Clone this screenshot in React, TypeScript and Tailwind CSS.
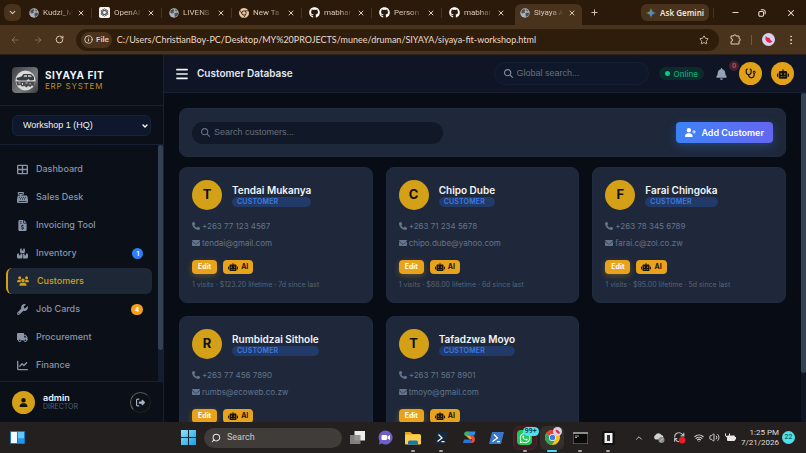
import type { ReactNode } from "react";
import {
  FaBars,
  FaBell,
  FaBoxesStacked,
  FaCashRegister,
  FaChartLine,
  FaChrome,
  FaEnvelope,
  FaFileInvoiceDollar,
  FaGithub,
  FaMagnifyingGlass,
  FaPhone,
  FaRightFromBracket,
  FaRobot,
  FaStethoscope,
  FaTableCellsLarge,
  FaTruck,
  FaUser,
  FaUserPlus,
  FaUsers,
  FaWhatsapp,
  FaWrench,
} from "react-icons/fa6";
import {
  ArrowLeft,
  ArrowRight,
  ChevronDown,
  ChevronUp,
  EllipsisVertical,
  Info,
  Minus,
  Plus,
  RotateCw,
  Search,
  Star,
  Volume2,
  Wifi,
  X,
} from "lucide-react";

type Favicon = "globe" | "openai" | "chrome" | "github";

const tabs: { id: number; title: string; icon: Favicon; active?: boolean }[] = [
  { id: 1, title: "Kudzi_M", icon: "globe" },
  { id: 2, title: "OpenAI", icon: "openai" },
  { id: 3, title: "LIVENS", icon: "globe" },
  { id: 4, title: "New Ta", icon: "chrome" },
  { id: 5, title: "mabhar", icon: "github" },
  { id: 6, title: "Person", icon: "github" },
  { id: 7, title: "mabhar", icon: "github" },
  { id: 8, title: "Siyaya A", icon: "globe", active: true },
];

const navItems = [
  { label: "Dashboard", icon: FaTableCellsLarge },
  { label: "Sales Desk", icon: FaCashRegister },
  { label: "Invoicing Tool", icon: FaFileInvoiceDollar },
  { label: "Inventory", icon: FaBoxesStacked, count: 1, countClass: "bg-blue-500" },
  { label: "Customers", icon: FaUsers, active: true },
  { label: "Job Cards", icon: FaWrench, count: 4, countClass: "bg-[#f59e1b]" },
  { label: "Procurement", icon: FaTruck },
  { label: "Finance", icon: FaChartLine },
];

type Customer = { name: string; phone: string; email: string; stats?: string };

const customers: Customer[] = [
  { name: "Tendai Mukanya", phone: "+263 77 123 4567", email: "tendai@gmail.com", stats: "1 visits · $123.20 lifetime · 7d since last" },
  { name: "Chipo Dube", phone: "+263 71 234 5678", email: "chipo.dube@yahoo.com", stats: "1 visits · $88.00 lifetime · 6d since last" },
  { name: "Farai Chingoka", phone: "+263 78 345 6789", email: "farai.c@zol.co.zw", stats: "1 visits · $95.00 lifetime · 5d since last" },
  { name: "Rumbidzai Sithole", phone: "+263 77 456 7890", email: "rumbs@ecoweb.co.zw" },
  { name: "Tafadzwa Moyo", phone: "+263 71 567 8901", email: "tmoyo@gmail.com" },
];

function TabIcon({ kind }: { kind: Favicon }) {
  if (kind === "github") return <FaGithub className="size-[11px] shrink-0 text-white" />;
  if (kind === "chrome") return <FaChrome className="size-[10px] shrink-0 text-[#e9c7a8]" />;
  if (kind === "openai") {
    return (
      <svg viewBox="0 0 20 20" className="size-[11px] shrink-0">
        <rect width="20" height="20" rx="3" fill="#f4f4f4" />
        <g fill="none" stroke="#444" strokeWidth="1.3">
          <ellipse cx="10" cy="10" rx="3.4" ry="6.8" />
          <ellipse cx="10" cy="10" rx="3.4" ry="6.8" transform="rotate(60 10 10)" />
          <ellipse cx="10" cy="10" rx="3.4" ry="6.8" transform="rotate(120 10 10)" />
        </g>
      </svg>
    );
  }
  return (
    <svg viewBox="0 0 20 20" className="size-[10px] shrink-0">
      <circle cx="10" cy="10" r="9.5" fill="#aeb4b9" />
      <path d="M3 5l5-3 3 2-2 3 1 2-4 2-3-1zM11 10l5-1 3 2-3 5-4 2-1-4z" fill="#4b5258" />
      <path d="M13 2l4 4-3 1-2-2z" fill="#5d656b" />
    </svg>
  );
}

function TabStrip() {
  return (
    <div className="flex h-[25px] shrink-0 items-stretch bg-[#2b1a09] text-[#d9c6b2]">
      <button aria-label="Search tabs" className="my-1 ml-1 mr-1 flex w-[17px] items-center justify-center rounded-md bg-[#49331d]">
        <ChevronDown className="size-[9px]" strokeWidth={3} />
      </button>
      <div className="flex min-w-0" role="tablist">
        {tabs.map((tab) => (
          <div
            key={tab.id}
            className={
              tab.active
                ? "mt-1 flex w-[67px] items-center rounded-t-md bg-[#49331d] pl-[5px] pr-1 pb-1"
                : "flex w-[70px] items-center pl-1"
            }
          >
            <button role="tab" aria-selected={!!tab.active} className="flex w-11 items-center gap-1">
              <TabIcon kind={tab.icon} />
              <span className="min-w-0 flex-1 whitespace-nowrap text-left text-[8px] [mask-image:linear-gradient(to_right,black_55%,transparent)]">
                {tab.title}
              </span>
            </button>
            <button aria-label="Close tab" className="ml-[2px] flex w-3 justify-center">
              <X className="size-2" strokeWidth={3} />
            </button>
            {!tab.active && tab.id !== 7 && <span className="ml-1 h-[10px] w-px bg-[#49331d]" />}
          </div>
        ))}
      </div>
      <button aria-label="New tab" className="flex w-6 items-center justify-center">
        <Plus className="size-[9px]" strokeWidth={2.5} />
      </button>
      <div className="ml-auto flex items-center">
        <button className="flex h-[17px] items-center gap-1 rounded-md bg-[#49331d] px-[5px] text-[8px] font-bold text-[#f3e4d3]">
          <svg viewBox="0 0 20 20" className="size-[10px]">
            <defs>
              <linearGradient id="gem" x1="0" y1="0" x2="1" y2="1">
                <stop offset=".1" stopColor="#f2b632" />
                <stop offset=".4" stopColor="#4fa06c" />
                <stop offset=".6" stopColor="#4285f4" />
                <stop offset=".9" stopColor="#d96570" />
              </linearGradient>
            </defs>
            <path d="M10 0c1 6 4 9 10 10-6 1-9 4-10 10-1-6-4-9-10-10 6-1 9-4 10-10z" fill="url(#gem)" />
          </svg>
          <span className="font-['Noto_Sans',sans-serif] font-semibold">Ask Gemini</span>
        </button>
        <span className="ml-1 h-[10px] w-px bg-[#49331d]" />
        <div className="flex text-[#efe3d6]">
          <button aria-label="Minimize" className="flex w-[34px] justify-center pl-2">
            <Minus className="size-[9px]" strokeWidth={2.5} />
          </button>
          <button aria-label="Restore" className="flex w-[28px] items-center justify-center">
            <svg viewBox="0 0 10 10" className="size-2" fill="none" stroke="currentColor" strokeWidth="1.3">
              <rect x="1" y="3" width="6" height="6" rx="1.5" />
              <path d="M3.5 1h3A2.5 2.5 0 0 1 9 3.5v3" />
            </svg>
          </button>
          <button aria-label="Close window" className="flex w-[30px] items-center justify-center">
            <X className="size-[10px]" strokeWidth={2.5} />
          </button>
        </div>
      </div>
    </div>
  );
}

function AddressBar() {
  return (
    <div className="flex h-[30px] shrink-0 items-center border-b border-[#2a211a] bg-[#49331d] text-[#e3cdb6]">
      <div className="flex w-[76px] items-center justify-between pl-[10px] pr-3">
        <button aria-label="Back" className="text-[#8d7357]"><ArrowLeft className="size-[10px]" /></button>
        <button aria-label="Forward" className="text-[#8d7357]"><ArrowRight className="size-[10px]" /></button>
        <button aria-label="Reload"><RotateCw className="size-[9px]" strokeWidth={2.5} /></button>
      </div>
      <div className="flex h-[22px] min-w-0 flex-1 items-center rounded-full bg-[#2f1d0c] pl-[5px] pr-[10px]">
        <span className="flex h-4 items-center gap-[3px] rounded-full bg-[#49331d] px-[3px] text-[8px] font-semibold">
          <Info className="size-[9px]" strokeWidth={2.5} />
          File
        </span>
        <input
          aria-label="Address"
          className="ml-[5px] min-w-0 flex-1 bg-transparent font-[Lato,sans-serif] text-[9px] text-[#ecdac8] outline-none"
          defaultValue="C:/Users/ChristianBoy-PC/Desktop/MY%20PROJECTS/munee/druman/SIYAYA/siyaya-fit-workshop.html"
        />
        <button aria-label="Bookmark this page"><Star className="size-[10px]" /></button>
      </div>
      <div className="flex items-center pl-[11px] pr-[9px]">
        <button aria-label="Extensions">
          <svg viewBox="0 0 22 22" className="size-[11px]" fill="none" stroke="currentColor" strokeWidth="2">
            <path d="M2 4h5a2.5 2.5 0 0 1 5 0h6v5a2.5 2.5 0 0 1 0 5v6H2v-5a3 3 0 0 0 0-6z" />
          </svg>
        </button>
        <span className="ml-[10px] h-[10px] w-px bg-[#755a3d]" />
        <button aria-label="Profile" className="ml-[10px]">
          <svg viewBox="0 0 26 26" className="size-[13px]">
            <circle cx="13" cy="13" r="13" fill="#d5d3ee" />
            <path d="M7 6l4 3 4 1 2 4 4 3-5 3-6-2-3-5z" fill="#e3264d" />
          </svg>
        </button>
        <button aria-label="Menu" className="ml-[10px]"><EllipsisVertical className="size-3" /></button>
      </div>
    </div>
  );
}

function Sidebar() {
  return (
    <aside className="flex w-[164px] shrink-0 flex-col border-r border-[#172131] bg-[#0b0f17]">
      <div className="flex h-[51px] shrink-0 items-center gap-[7px] border-b border-[#172131] px-3">
        <svg viewBox="0 0 52 52" className="size-[26px]">
          <defs>
            <linearGradient id="logo-bg" x1="0" y1="0" x2="1" y2="1">
              <stop offset="0" stopColor="#3c3e42" />
              <stop offset=".6" stopColor="#77797c" />
              <stop offset="1" stopColor="#3a3b3e" />
            </linearGradient>
          </defs>
          <rect width="52" height="52" rx="8" fill="url(#logo-bg)" />
          <circle cx="27" cy="27" r="20" fill="#d9d9d9" />
          <path d="M9 22l10-3 4-5h15l6 6v6l-8 1-3-3-4 3H15l-5-1z" fill="#3a3b3d" />
          <path d="M25 16h5v4h-7zM32 16h5l3 4h-8z" fill="#b5b6b8" />
          <path d="M8 29h38l-2 9-5-1-2 3-5-2-3 3-4-3-5 1-3-3-6 1z" fill="#4a4b4d" />
          <path d="M13 32h4M21 32v4M27 32h4M36 32v3" stroke="#c9c9c9" strokeWidth="2" />
        </svg>
        <div>
          <div className="text-[10px] font-bold leading-3 tracking-wider text-slate-100">SIYAYA FIT</div>
          <div className="text-[8px] leading-[10px] tracking-widest text-[#bd8f1b]">ERP SYSTEM</div>
        </div>
      </div>
      <div className="h-[39px] shrink-0 border-b border-[#172131] px-3 pt-[9px]">
        <label className="relative flex items-center">
          <span className="sr-only">Workshop</span>
          <select className="block h-[21px] w-full appearance-none rounded-md border border-[#18243a] bg-[#0e172b] px-[10px] font-['Liberation_Sans',sans-serif] text-[9px] text-slate-100 outline-none">
            <option>Workshop 1 (HQ)</option>
          </select>
          <ChevronDown className="pointer-events-none absolute right-[2px] size-2 text-white" strokeWidth={4} />
        </label>
      </div>
      <div className="flex min-h-0 flex-1">
        <nav className="flex min-w-0 flex-1 flex-col gap-[2px] overflow-hidden px-[6px] py-[11px]">
          {navItems.map(({ label, icon: Icon, count, countClass, active }) => (
            <a
              key={label}
              href="#"
              className={
                active
                  ? "flex h-[26px] shrink-0 items-center gap-2 rounded-md border-l-2 border-[#d4a017] bg-[#1e2735] pl-[9px] pr-[9px] text-[9px] font-medium text-[#d4a017]"
                  : "flex h-[26px] shrink-0 items-center gap-2 rounded-md pl-[10px] pr-[9px] text-[9px] font-medium text-[#8995a8]"
              }
            >
              <span className="flex w-3 shrink-0 justify-center"><Icon className={active ? "size-3 shrink-0" : "size-[11px] shrink-0"} /></span>
              <span className="flex-1">{label}</span>
              {count ? (
                <span className={`flex h-[11px] items-center rounded-full px-1 text-[6px] font-bold text-white ${countClass}`}>
                  {count}
                </span>
              ) : null}
            </a>
          ))}
        </nav>
        <div className="w-[5px] bg-[#141d2d]">
          <div className="h-[87%] rounded-full bg-[#334155]" />
        </div>
      </div>
      <div className="flex h-[41px] shrink-0 items-center gap-2 border-t border-[#172131] px-3">
        <span className="flex size-[23px] items-center justify-center rounded-full bg-[#d4a017] text-[#15130c]">
          <FaUser className="size-[9px]" />
        </span>
        <div className="flex-1">
          <div className="text-[9px] font-semibold leading-[10px] text-slate-100">admin</div>
          <div className="text-[7px] leading-2 text-[#556176]">DIRECTOR</div>
        </div>
        <button aria-label="Log out" className="flex size-[21px] items-center justify-center rounded-full border border-b-[#222] border-l-[#666] border-r-[#222] border-t-[#555] bg-[#0c1017] text-[#a8b3c4]">
          <FaRightFromBracket className="size-[9px]" />
        </button>
      </div>
    </aside>
  );
}

function TopBar() {
  return (
    <header className="flex h-[38px] shrink-0 items-center border-b border-[#172133] bg-[#0f1524] pl-3 pr-3">
      <button aria-label="Toggle menu" className="text-slate-100"><FaBars className="h-[14px] w-3" /></button>
      <h1 className="ml-[9px] flex-1 whitespace-nowrap text-[10px] font-semibold text-slate-200">Customer Database</h1>
      <label className="flex h-[23px] w-[155px] items-center gap-1 rounded-full border border-[#162035] bg-[#0f172a] px-[9px]">
        <FaMagnifyingGlass className="size-[9px] text-[#8290a5]" />
        <span className="sr-only">Global search</span>
        <input placeholder="Global search..." className="min-w-0 flex-1 bg-transparent font-['Liberation_Sans',sans-serif] text-[9px] text-slate-200 outline-none placeholder:text-[#68717f]" />
      </label>
      <span className="ml-[10px] flex h-[13px] items-center gap-1 rounded-full bg-[#0c2b2b] px-[6px] text-[8px] font-medium text-[#10a878]">
        <span className="size-[5px] rounded-full bg-[#10c48a]" />
        Online
      </span>
      <button aria-label="Notifications" className="relative ml-3 flex w-[11px] justify-center text-[#94a3b8]">
        <FaBell className="size-3" />
        <span className="absolute -right-3 -top-[7px] flex size-[10px] items-center justify-center rounded-full bg-[#47202e] text-[6px] font-bold text-[#e0404c]">0</span>
      </button>
      <button aria-label="Diagnostics" className="ml-3 flex size-[23px] items-center justify-center rounded-full bg-[#e3a11a] text-[#16140e]">
        <FaStethoscope className="size-[11px]" />
      </button>
      <button aria-label="Assistant" className="ml-[9px] flex size-[23px] items-center justify-center rounded-full bg-[#e3a11a] text-[#16140e]">
        <FaRobot className="size-3" />
      </button>
    </header>
  );
}

function CustomerCard({ customer }: { customer: Customer }) {
  return (
    <article className="min-h-[135px] rounded-lg border border-[#202b3e] bg-[#1e283a] p-3">
      <div className="flex items-center gap-[10px]">
        <span className="flex size-[30px] shrink-0 items-center justify-center rounded-full bg-[#d4a017] text-[13px] font-bold text-[#0d1017]">
          {customer.name[0]}
        </span>
        <div>
          <h3 className="text-[10px] font-semibold leading-[14px] text-slate-100">{customer.name}</h3>
          <div className="rounded-full bg-[#213a68] px-[5px] text-[7px] font-semibold leading-[10px] tracking-wide text-[#3d7be0]">CUSTOMER</div>
        </div>
      </div>
      <p className="mt-[9px] flex items-center gap-[2px] text-[8px] leading-[14px] text-[#64748b]">
        <FaPhone className="size-2" />
        {customer.phone}
      </p>
      <p className="mt-[3px] flex items-center gap-[2px] text-[8px] leading-[14px] text-[#64748b]">
        <FaEnvelope className="size-2" />
        {customer.email}
      </p>
      <div className="mt-[10px] flex gap-[6px]">
        <button className="h-[14px] rounded bg-[#e9a21b] px-[6px] text-[7px] font-bold text-white shadow-[0_2px_6px_rgba(233,162,27,0.3)]">Edit</button>
        <button className="flex h-[14px] items-center gap-[3px] rounded bg-[#e9a21b] px-[5px] text-[7px] font-bold text-[#1a160c]">
          <FaRobot className="size-[10px]" />
          AI
        </button>
      </div>
      {customer.stats ? (
        <p className="mt-[6px] whitespace-nowrap text-[7px] leading-[10px] text-[#566378]">{customer.stats}</p>
      ) : null}
    </article>
  );
}

function Workspace() {
  return (
    <div className="flex min-w-0 flex-1 flex-col bg-[#080c15]">
      <TopBar />
      <div className="flex min-h-0 flex-1">
        <main className="min-w-0 flex-1 overflow-hidden px-[15px] pb-4 pt-[15px]">
          <section className="flex h-[49px] items-center justify-between rounded-lg border border-[#202b3e] bg-[#1e283a] px-3">
            <label className="flex h-[22px] w-[251px] items-center gap-1 rounded-full bg-[#111827] px-[9px]">
              <FaMagnifyingGlass className="size-[9px] text-[#64748b]" />
              <span className="sr-only">Search customers</span>
              <input placeholder="Search customers..." className="min-w-0 flex-1 bg-transparent font-['Liberation_Sans',sans-serif] text-[9px] text-slate-200 outline-none placeholder:text-[#68717f]" />
            </label>
            <button className="flex h-[21px] items-center gap-[5px] rounded bg-linear-to-r from-[#3b82f6] to-[#6366f1] px-[9px] text-[9px] font-semibold text-white shadow-[0_3px_10px_rgba(59,130,246,0.3)]">
              <FaUserPlus className="size-[11px]" />
              Add Customer
            </button>
          </section>
          <div className="mt-[10px] grid grid-cols-3 gap-[13px]">
            {customers.map((c) => (
              <CustomerCard key={c.name} customer={c} />
            ))}
          </div>
        </main>
        <div className="w-[5px] bg-[#0f1726]">
          <div className="h-[85%] rounded-full bg-[#334155]" />
        </div>
      </div>
    </div>
  );
}

function TaskButton({ label, running, current, children }: { label: string; running?: boolean; current?: boolean; children: ReactNode }) {
  return (
    <button aria-label={label} className="relative flex h-full flex-1 items-center justify-center">
      {children}
      {current ? <span className="absolute bottom-[1px] h-[2px] w-[10px] rounded-full bg-[#4cd7ea]" /> : null}
      {running ? <span className="absolute bottom-[1px] h-[2px] w-[4px] rounded-full bg-[#a9a5a3]" /> : null}
    </button>
  );
}

function Taskbar() {
  return (
    <footer className="flex h-[31px] shrink-0 items-center bg-[#23201f] text-[#dedede]">
      <button aria-label="Widgets" className="ml-[10px]">
        <svg viewBox="0 0 30 26" className="h-[13px] w-[15px]">
          <rect width="30" height="26" rx="2" fill="#1976c9" />
          <rect x="2" y="2" width="12" height="22" fill="#f4f9ff" />
          <rect x="16" y="2" width="12" height="13" fill="#62c9fb" />
          <rect x="16" y="16" width="12" height="8" fill="#2298ec" />
        </svg>
      </button>
      <div className="ml-auto flex h-full items-center">
        <button aria-label="Start">
          <svg viewBox="0 0 30 30" className="size-[15px]">
            <defs>
              <linearGradient id="win" x1="0" y1="0" x2="1" y2="1">
                <stop offset="0" stopColor="#8be4fb" />
                <stop offset="1" stopColor="#159ee8" />
              </linearGradient>
            </defs>
            <path d="M0 0h14v14H0zM16 0h14v14H16zM0 16h14v14H0zM16 16h14v14H16z" fill="url(#win)" />
          </svg>
        </button>
        <label className="ml-2 flex h-[20px] w-[138px] items-center gap-[6px] rounded-full bg-[#3f3c3a] px-[7px]">
          <Search className="size-[10px] -scale-x-100 text-[#e4e4e4]" strokeWidth={2.5} />
          <span className="sr-only">Search</span>
          <input placeholder="Search" className="min-w-0 flex-1 bg-transparent text-[9px] outline-none placeholder:text-[#cfcac6]" />
        </label>
        <div className="ml-[2px] flex h-full w-[278px]">
          <TaskButton label="Task view">
            <svg viewBox="0 0 30 26" className="h-[13px] w-[15px]">
              <rect x="9" y="0" width="21" height="19" fill="#ececec" />
              <rect x="0" y="8" width="21" height="18" fill="#8b8b8b" fillOpacity=".9" />
            </svg>
          </TaskButton>
          <TaskButton label="Chat">
            <svg viewBox="0 0 30 30" className="size-[15px]">
              <path d="M15 1a14 14 0 1 1-7 26l-6 2 1-7A14 14 0 0 1 15 1z" fill="#6f5fc7" />
              <rect x="7" y="10" width="11" height="10" rx="2" fill="#fff" />
              <path d="M19 13l5-3v10l-5-3z" fill="#fff" />
            </svg>
          </TaskButton>
          <TaskButton label="File Explorer" running>
            <svg viewBox="0 0 32 28" className="h-[14px] w-4">
              <path d="M0 2h11l4 4h15v8H0z" fill="#e5a21b" />
              <rect x="0" y="7" width="32" height="20" rx="2" fill="#fbd04e" />
              <path d="M6 27v-5a3 3 0 0 1 3-3h14a3 3 0 0 1 3 3v5z" fill="#1976b5" />
            </svg>
          </TaskButton>
          <TaskButton label="Terminal" running>
            <svg viewBox="0 0 28 24" className="h-3 w-[14px]">
              <path d="M5 0h23l-5 24H0z" fill="#17283b" />
              <path d="M9 5l7 7-9 7M15 19h6" fill="none" stroke="#fff" strokeWidth="2.5" />
            </svg>
          </TaskButton>
          <TaskButton label="Sync">
            <svg viewBox="0 0 26 26" className="size-[13px]">
              <path d="M9 1h16l-2 8H10z" fill="#2f8de8" />
              <path d="M7 1h5l-2 9H6C1 9 1 2 7 1z" fill="#3bb55b" />
              <path d="M5 9l10 0 4 7-5 1z" fill="#f2a634" />
              <path d="M14 9h5c7 2 6 14 0 15h-5l4-7z" fill="#e94b3b" />
              <path d="M2 17h14l-1 7H0z" fill="#2877d6" />
            </svg>
          </TaskButton>
          <TaskButton label="PowerShell">
            <svg viewBox="0 0 30 24" className="h-3 w-[15px]">
              <path d="M6 0h24l-6 24H0z" fill="#3977c9" />
              <path d="M10 5l7 7-10 7M16 19h6" fill="none" stroke="#fff" strokeWidth="2.5" />
            </svg>
          </TaskButton>
          <TaskButton label="WhatsApp" running>
            <span className="flex size-6 items-center justify-center rounded-md border border-[#4d2329] bg-[#3a2023]">
              <span className="flex size-[15px] items-center justify-center rounded-sm bg-[#20c95a] text-white">
                <FaWhatsapp className="size-3" />
              </span>
            </span>
            <span className="absolute left-3 top-[5px] rounded-full bg-[#4de1ee] px-[2px] text-[7px] font-medium leading-[9px] text-[#14343a]">99+</span>
          </TaskButton>
          <TaskButton label="Chrome" current>
            <span className="flex size-6 items-center justify-center rounded-md bg-[#34302e]">
              <svg viewBox="0 0 30 30" className="size-[15px]">
                <circle cx="15" cy="15" r="15" fill="#fbc116" />
                <path d="M15 15L2 7.5A15 15 0 0 1 28 7.5z" fill="#e94235" />
                <path d="M15 15L2 7.5A15 15 0 0 0 14 30l7-12z" fill="#34a353" />
                <circle cx="15" cy="15" r="7" fill="#fff" />
                <circle cx="15" cy="15" r="5.5" fill="#3c7de8" />
              </svg>
            </span>
            <span className="absolute right-1 top-[5px] flex size-[9px] items-center justify-center rounded-full bg-[#d5d3e4]">
              <svg viewBox="0 0 10 10" className="size-[6px]"><path d="M1 1l4 1 4 5-4 1-3-3z" fill="#e3264d" /></svg>
            </span>
          </TaskButton>
          <TaskButton label="Command Prompt" running>
            <svg viewBox="0 0 30 24" className="h-3 w-[15px]">
              <rect width="30" height="24" fill="#8d8d8d" />
              <rect x="1" y="4" width="28" height="19" fill="#0a0a0a" />
              <path d="M4 8h8M4 11h4" stroke="#ddd" strokeWidth="1.5" />
            </svg>
          </TaskButton>
          <TaskButton label="Console" running>
            <svg viewBox="0 0 26 28" className="h-[14px] w-[13px]">
              <rect width="26" height="28" rx="3" fill="#111" />
              <rect x="5" y="4" width="16" height="20" fill="#f1f1f1" />
              <rect x="10" y="8" width="6" height="12" fill="#333" />
            </svg>
          </TaskButton>
        </div>
      </div>
      <div className="ml-3 flex items-center">
        <button aria-label="Show hidden icons"><ChevronUp className="size-[10px]" /></button>
        <svg viewBox="0 0 24 20" className="ml-[9px] h-[10px] w-3">
          <path d="M5 13a5 5 0 0 1 0-9 7 7 0 0 1 12 0 5 5 0 0 1 4 5l-8 4z" fill="#d0d0d0" />
          <circle cx="17" cy="14" r="6" fill="#8b8b8b" />
          <path d="M14 17l6-6" stroke="#eee" strokeWidth="1.5" />
        </svg>
        <svg viewBox="0 0 24 24" className="ml-2 size-[13px]">
          <path d="M3 12a8 8 0 0 1 14-6l3 3M20 3v6h-6M11 20a8 8 0 0 1-6-4l-2-2M3 20v-6h5" fill="none" stroke="#bcbcbc" strokeWidth="2" />
          <circle cx="17" cy="17" r="6" fill="#ee1c25" />
        </svg>
        <button aria-label="Network, volume and battery" className="ml-2 flex items-center gap-[5px]">
          <Wifi className="size-[10px]" strokeWidth={2.5} />
          <Volume2 className="size-[11px]" />
          <svg viewBox="0 0 22 18" className="h-[9px] w-[11px]">
            <rect x="4" y="5" width="16" height="11" rx="2" fill="#e8e8e8" />
            <path d="M20 8h2v5h-2z" fill="#e8e8e8" />
            <path d="M1 1v3a4 4 0 0 0 8 0V1M5 8v4" stroke="#e8e8e8" strokeWidth="2" fill="none" />
          </svg>
        </button>
        <div className="w-[43px] text-right text-[8px] leading-[10px]">
          <div>1:25 PM</div>
          <div>7/21/2026</div>
        </div>
        <span className="ml-[3px] mr-[11px] flex size-[13px] items-center justify-center rounded-full bg-[#4de1ee] text-[7px] text-[#14343a]">22</span>
      </div>
    </footer>
  );
}

export default function App() {
  return (
    <div className="flex h-screen flex-col overflow-hidden bg-[#080c15] font-[Roboto,sans-serif]">
      <TabStrip />
      <AddressBar />
      <div className="flex min-h-0 flex-1 font-['Inter',sans-serif]">
        <Sidebar />
        <Workspace />
      </div>
      <Taskbar />
    </div>
  );
}
